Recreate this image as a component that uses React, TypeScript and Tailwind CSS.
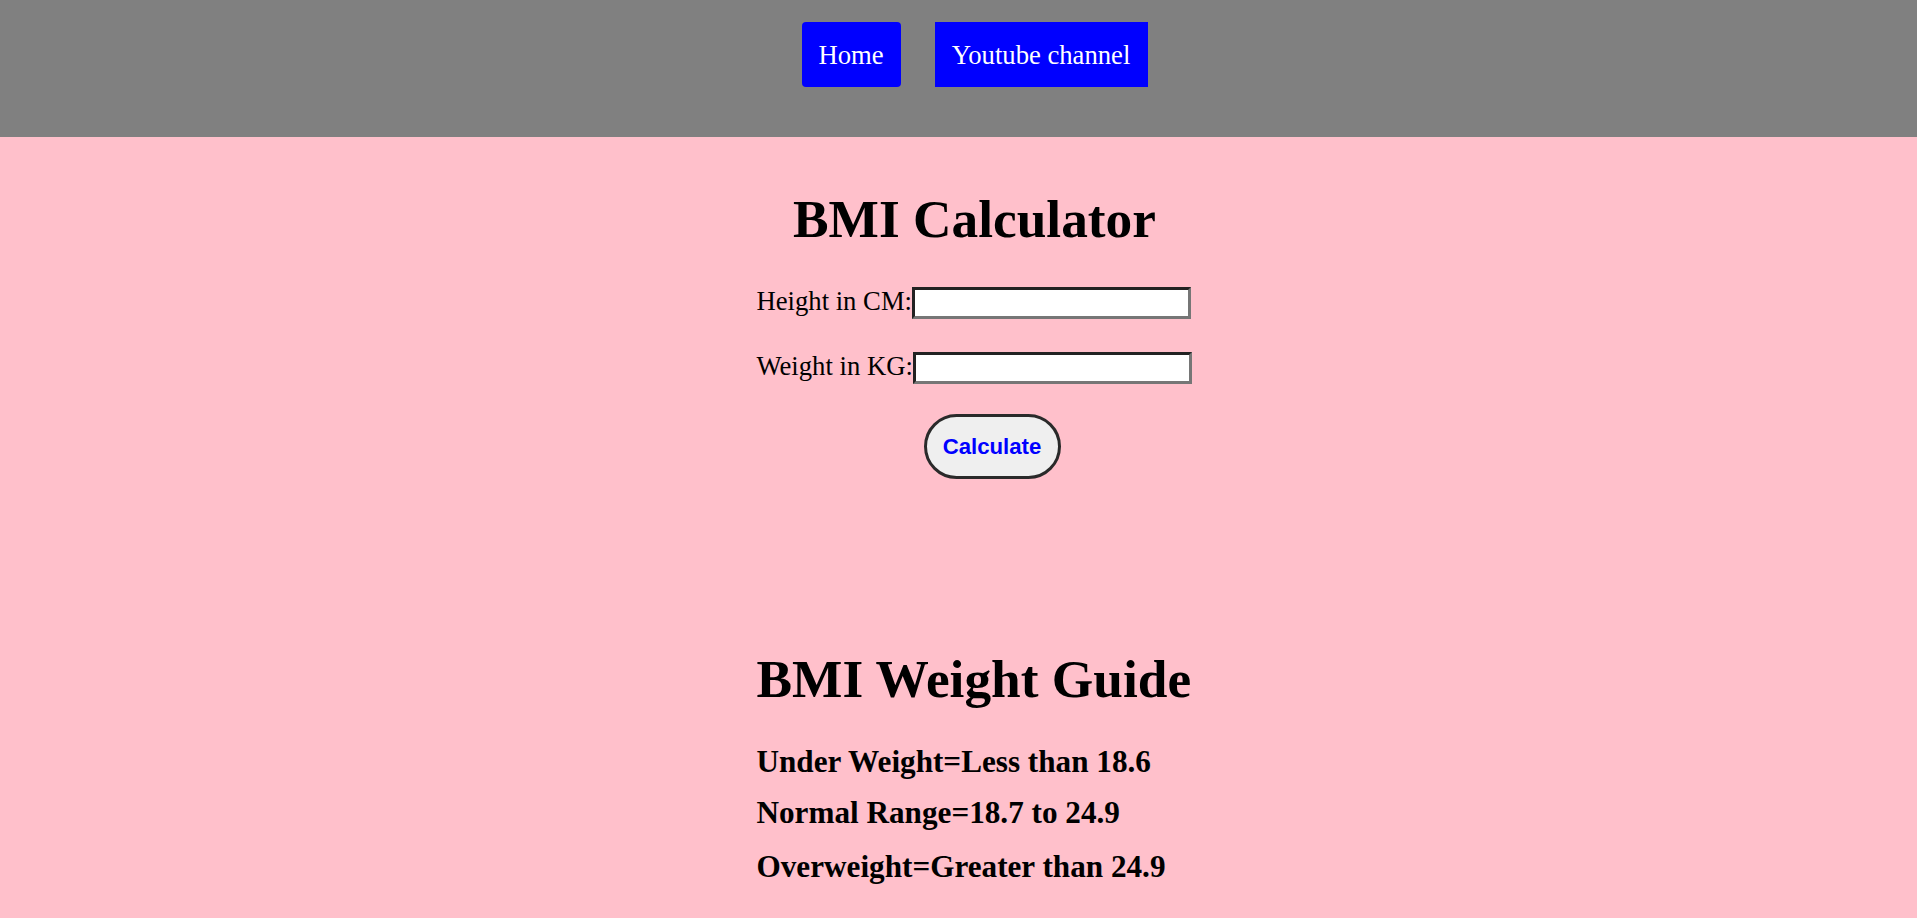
export default function App() {
  return (
    <div className="min-h-screen bg-[#ffc0cb] font-['Liberation_Serif',serif] text-black">
      {/* nav bar */}
      <header className="h-[137px] bg-[#808080] flex justify-center items-start gap-[34px] pt-[22px] pl-[32px]">
        <a className="w-[99px] h-[65px] flex items-center justify-center rounded-[4px] bg-[#0000ff] text-white text-[26.67px]">
          Home
        </a>
        <a className="w-[213px] h-[65px] flex items-center justify-center bg-[#0000ff] text-white text-[26.67px]">
          Youtube channel
        </a>
      </header>

      <main className="pl-[32px] flex justify-center">
        <div className="w-[436px] pt-[52px] flex flex-col">
          <h1 className="text-center text-[53.33px] leading-[61px] font-bold">BMI Calculator</h1>

          <div className="mt-[34px] flex items-start text-[26.67px]">
            <label className="mt-[2px] leading-[31px] whitespace-nowrap">Height in CM:</label>
            <input className="mt-[3px] w-[279px] h-[32px] bg-white border-[3px] border-t-[#222] border-l-[#222] border-r-[#767676] border-b-[#767676] outline-none" />
          </div>
          <div className="mt-[30px] flex items-start text-[26.67px]">
            <label className="mt-[2px] leading-[31px] whitespace-nowrap">Weight in KG:</label>
            <input className="mt-[3px] w-[279px] h-[32px] bg-white border-[3px] border-t-[#222] border-l-[#222] border-r-[#767676] border-b-[#767676] outline-none" />
          </div>

          <button className="mt-[30px] ml-[167px] w-[137px] h-[65px] rounded-full bg-[#efefef] border-[3px] border-[#2a2a2a] font-['Liberation_Sans',Arial,sans-serif] font-bold text-[22.2px] text-[#0000ff]">
            Calculate
          </button>

          <h1 className="mt-[170px] text-[53.33px] leading-[61px] font-bold">BMI Weight Guide</h1>
          <h3 className="mt-[34px] text-[31.2px] leading-[36px] font-bold">Under Weight=Less than 18.6</h3>
          <h3 className="mt-[15px] text-[31.2px] leading-[36px] font-bold">Normal Range=18.7 to 24.9</h3>
          <h3 className="mt-[18px] text-[31.2px] leading-[36px] font-bold">Overweight=Greater than 24.9</h3>
        </div>
      </main>
    </div>
  )
}
